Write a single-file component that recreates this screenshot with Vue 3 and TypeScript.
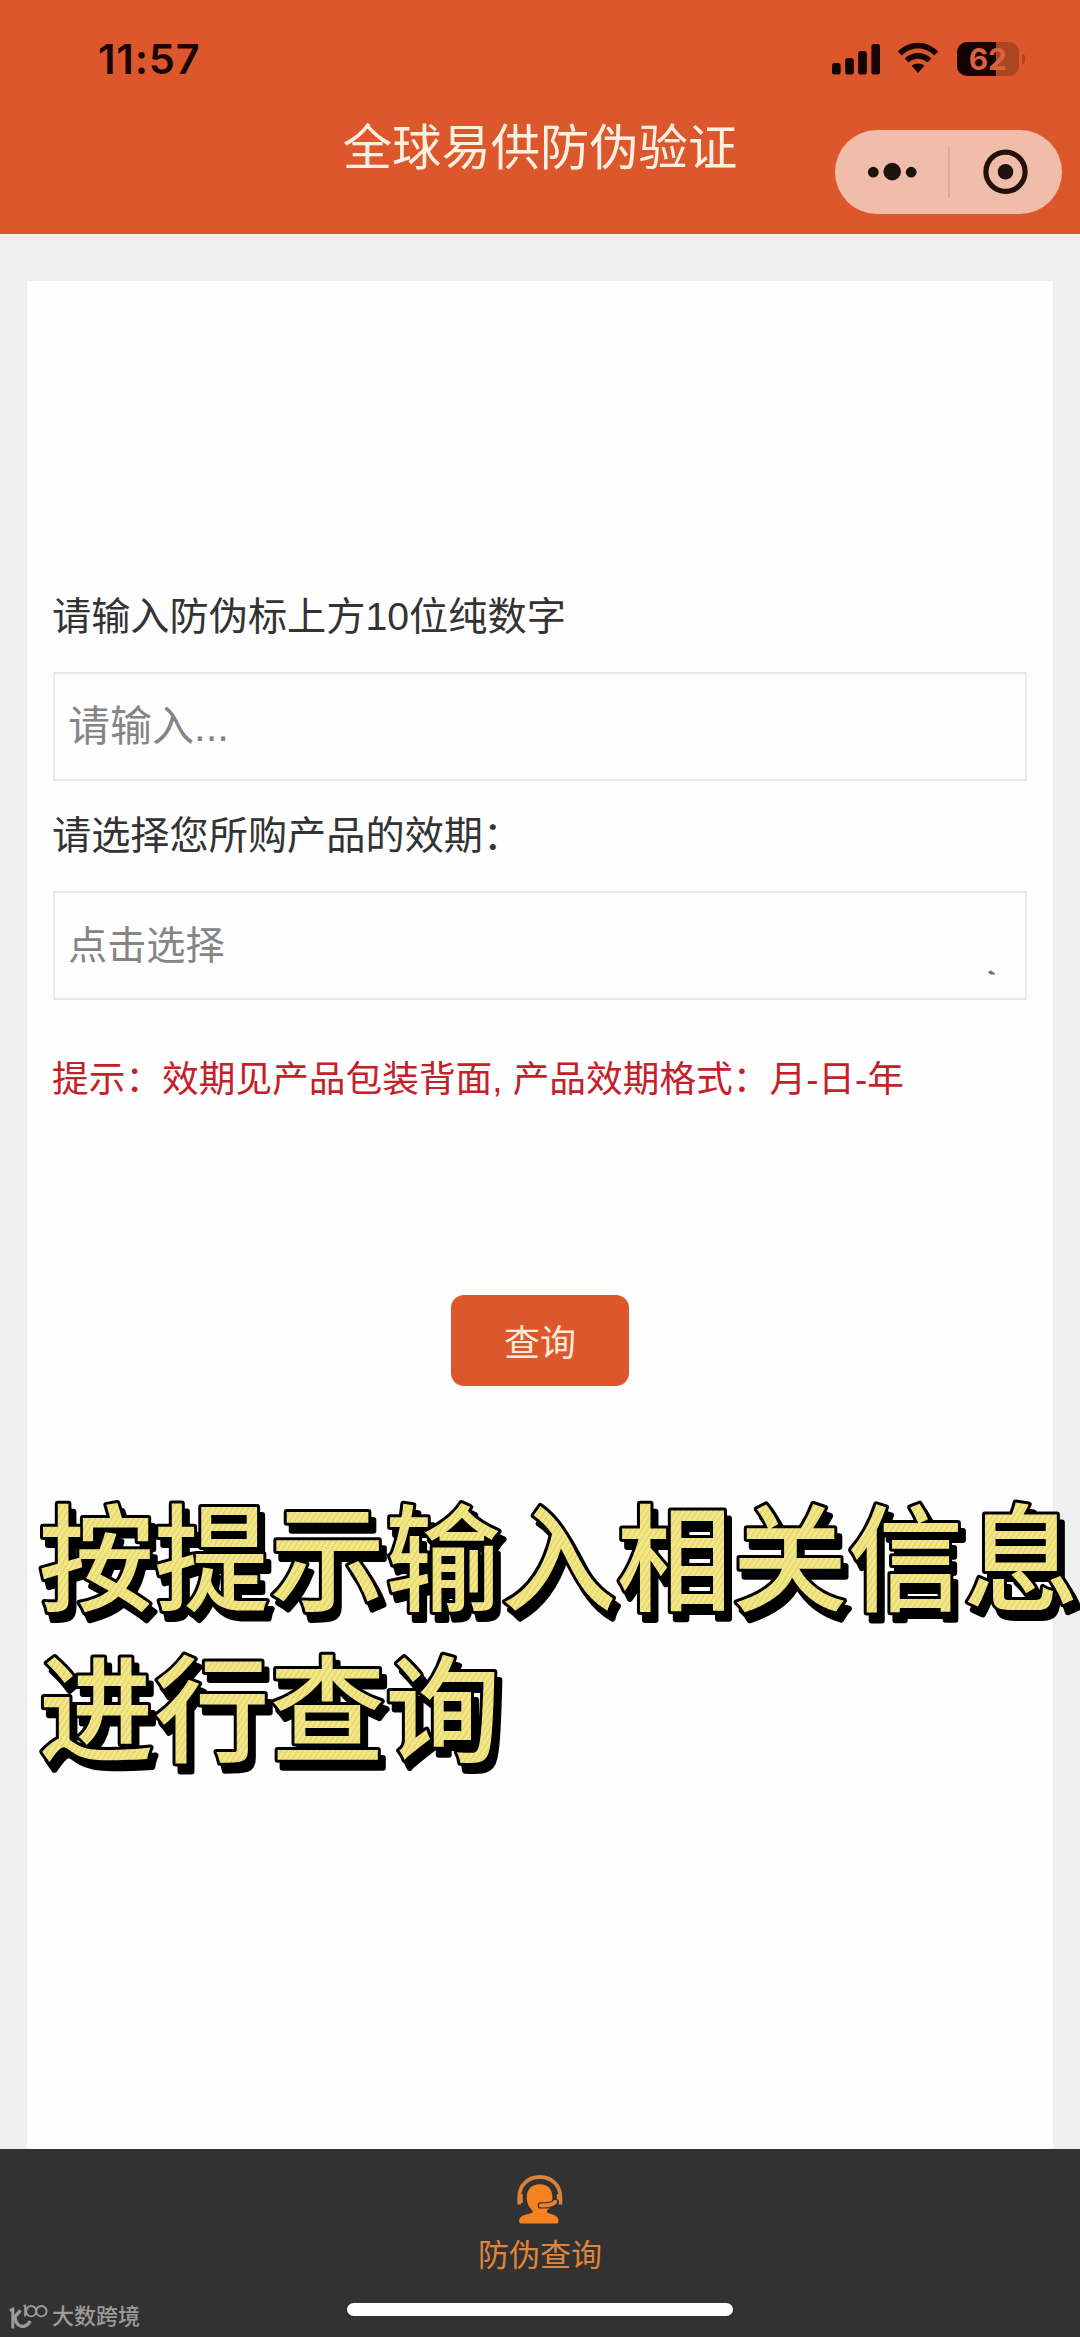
<script setup lang="ts">
interface Bar {
  x: number
  y: number
}

const signalBars: Bar[] = [
  { x: 0, y: 19 },
  { x: 13.2, y: 14 },
  { x: 26.2, y: 7 },
  { x: 39.4, y: 0 },
]

const captionLines: string[] = ['按提示输入相关信息', '进行查询']
</script>

<template>
  <div class="screen">
    <header class="header">
      <div class="status">
        <span class="clock">11:57</span>
        <div class="status-icons">
          <svg class="signal" width="48" height="31" viewBox="0 0 48 31">
            <rect v-for="bar in signalBars" :key="bar.x" :x="bar.x" :y="bar.y" width="8.6" :height="30.5 - bar.y" rx="2.6" />
          </svg>
          <svg class="wifi" width="42" height="32" viewBox="0 0 42 32">
            <path d="M0.8 9.6C12 -2.2 30 -2.2 41.2 9.6L37.4 13.6C28.2 4.2 13.8 4.2 4.6 13.6Z" />
            <path d="M7.6 16.6C15.4 9.2 26.6 9.2 34.4 16.6L30.4 20.6C25 15.6 17 15.6 11.6 20.6Z" />
            <path d="M14.6 23.8C18.4 20.8 23.6 20.8 27.4 23.8L21 31Z" />
          </svg>
          <div class="battery">
            <span class="battery-level">62</span>
            <span class="battery-nub"></span>
          </div>
        </div>
      </div>
      <h1 class="title">全球易供防伪验证</h1>
      <div class="capsule">
        <svg width="227" height="84" viewBox="0 0 227 84">
          <g fill="#1c130f">
            <circle cx="38.3" cy="42.2" r="5.4" />
            <circle cx="57.2" cy="41.6" r="8.8" />
            <circle cx="76.2" cy="42.2" r="5.4" />
            <circle cx="170.5" cy="41.8" r="7.8" />
          </g>
          <path d="M114 17V68" stroke="#dfa998" stroke-width="2" />
          <circle cx="170.5" cy="41.8" r="19.6" fill="none" stroke="#241008" stroke-width="5.2" />
        </svg>
      </div>
    </header>

    <main class="page">
      <section class="card">
        <label class="label">请输入防伪标上方10位纯数字</label>
        <div class="field code">请输入...</div>
        <label class="label second">请选择您所购产品的效期：</label>
        <div class="field picker">
          <span>点击选择</span>
          <svg class="mark" width="7" height="5" viewBox="0 0 7 5">
            <path d="M0 2.6L2.6 0.2L7 3.4V4.6H2.6Z" fill="#707070" />
          </svg>
        </div>
        <p class="tip">提示：效期见产品包装背面, 产品效期格式：月-日-年</p>
        <button class="submit" type="button">查询</button>
      </section>
    </main>

    <nav class="tabbar">
      <svg class="agent" width="46" height="50" viewBox="0 0 46 50">
        <path d="M2.2 29.5V22.5C2.2 10 11 2 22.8 2C34.6 2 43.4 10 43.4 22.5V29.5" fill="none" stroke="#d9823c" stroke-width="3.8" />
        <path d="M5.8 19V28H1.6V20Z M39.8 19V28H44V20Z" fill="#d9823c" />
        <path d="M22.8 9.2C31 9.2 35.4 14.4 35.4 22C35.4 28.4 33.6 32.4 30 35.8V37.6C35 39.6 41.4 40.6 41.4 45.4V46.6C41.4 48 40.6 48.6 39.4 48.6H4.2C3 48.6 2.2 48 2.2 46.6V45.4C2.2 40.6 10 39.6 15.6 37.6V35.8C12 32.4 9.8 28.4 9.8 22C9.8 14.4 14.6 9.2 22.8 9.2Z" fill="#f5821f" />
        <path d="M38.6 26.8C36 30.4 31 30.4 23.8 30.4" fill="none" stroke="#323232" stroke-width="6.4" stroke-linecap="round" />
        <path d="M38.2 26.8C36 30.4 30 30.4 23.8 30.4" fill="none" stroke="#e58334" stroke-width="4" stroke-linecap="round" />
      </svg>
      <span class="tab-text">防伪查询</span>
      <span class="home-bar"></span>
    </nav>

    <svg class="caption" width="1080" height="330" viewBox="0 0 1080 330">
      <defs>
        <pattern id="stripes" width="4.6" height="4.6" patternUnits="userSpaceOnUse" patternTransform="rotate(32)">
          <rect width="4.6" height="4.6" fill="#f3e892" />
          <rect width="2" height="4.6" fill="#e9d968" />
        </pattern>
      </defs>
      <text v-for="(line, i) in captionLines" :key="line" x="38.5" :y="132 + i * 151" fill="url(#stripes)">{{ line }}</text>
    </svg>

    <div class="watermark">
      <svg width="39" height="26" viewBox="0 0 39 26" fill="none" stroke="#9b9b9b">
        <path d="M0.8 6.8L3.8 5.2V24.6" stroke-width="3" />
        <path d="M11.4 6.4L5.8 13C6.4 18.6 9.8 23 14 22.4C17.4 22 19.8 19.8 21.2 17" stroke-width="3.4" />
        <path d="M14.4 1.8H16.2V12.6" stroke-width="2" />
        <ellipse cx="22.2" cy="7.2" rx="5" ry="5.2" stroke-width="1.9" />
        <ellipse cx="32.4" cy="7.2" rx="5.2" ry="5.2" stroke-width="1.9" />
      </svg>
      <span>大数跨境</span>
    </div>
  </div>
</template>

<style>
body {
  margin: 0;
  background: #efefef;
}
</style>

<style scoped>
.screen {
  position: relative;
  display: flex;
  flex-direction: column;
  width: 1080px;
  height: 2337px;
  overflow: hidden;
  background: #f0efef;
  font-family: 'Liberation Sans', 'Noto Sans CJK SC', sans-serif;
}

.header {
  position: relative;
  flex: none;
  height: 234px;
  background: #dc582c;
}

.status {
  display: flex;
  justify-content: space-between;
  align-items: center;
  height: 118px;
  padding: 0 61px 0 98px;
}

.clock {
  font: 600 41.5px/48px Inter, sans-serif;
  letter-spacing: 0.8px;
  color: #1a0503;
}

.status-icons {
  display: flex;
  align-items: center;
}

.signal,
.wifi {
  fill: #150402;
}

.wifi {
  margin: 0 17.5px 2px 17px;
}

.battery {
  position: relative;
  display: flex;
  align-items: center;
  justify-content: center;
  width: 62.5px;
  height: 34px;
  border-radius: 10px;
  background: linear-gradient(90deg, #150201 38.7px, #aa4720 38.7px);
}

.battery-level {
  font: 700 30px/34px Inter, sans-serif;
  letter-spacing: -0.3px;
  color: #dc6340;
}

.battery-nub {
  position: absolute;
  left: 65px;
  top: 12px;
  width: 3.5px;
  height: 10px;
  border-radius: 0 4px 4px 0;
  background: #aa4720;
}

.title {
  margin: 0;
  font-size: 49.3px;
  line-height: 60px;
  font-weight: 400;
  text-align: center;
  color: #fff0e2;
}

.capsule {
  position: absolute;
  left: 834.7px;
  top: 130px;
  width: 227px;
  height: 84px;
  border-radius: 42px;
  background: #f1bdab;
}

.page {
  flex: 1;
  display: flex;
  padding: 47px 27px 0;
}

.card {
  flex: 1;
  display: flex;
  flex-direction: column;
  padding: 306px 26px 0;
  background: #fefefe;
}

.label {
  height: 60px;
  margin-left: -1px;
  font-size: 39.2px;
  line-height: 60px;
  color: #333;
}

.label.second {
  margin-top: 25px;
}

.field {
  box-sizing: border-box;
  height: 109px;
  margin-top: 25px;
  padding: 0 13px;
  border: 2.5px solid #e9e9e9;
  color: #858585;
}

.code {
  font-size: 42px;
  line-height: 106px;
}

.picker {
  display: flex;
  justify-content: space-between;
  font-size: 39.2px;
  line-height: 105px;
}

.mark {
  margin: 77px 17px 0 0;
}

.tip {
  margin: 52px 0 0 -1px;
  font-size: 36.7px;
  line-height: 56px;
  white-space: nowrap;
  color: #c4202a;
}

.submit {
  align-self: center;
  width: 178px;
  height: 91px;
  margin-top: 187px;
  padding: 0;
  border: 0;
  border-radius: 13px;
  background: #dc582c;
  font: 400 36px/91px 'Noto Sans CJK SC', sans-serif;
  color: #ffe9d8;
}

.tabbar {
  flex: none;
  display: flex;
  flex-direction: column;
  align-items: center;
  height: 188px;
  background: #323232;
}

.agent {
  flex: none;
  margin-top: 26px;
}

.tab-text {
  margin-top: 8px;
  font-size: 31px;
  line-height: 46px;
  color: #e0843a;
}

.home-bar {
  width: 386px;
  height: 13px;
  margin-top: 24px;
  border-radius: 7px;
  background: #fff;
}

.caption {
  position: absolute;
  left: 0;
  top: 1470px;
  font: 500 115.6px 'Noto Sans CJK SC', sans-serif;
  filter: drop-shadow(5.5px 8px 0 #000);
}

.caption text {
  stroke: #000;
  stroke-width: 6px;
  stroke-linejoin: round;
  paint-order: stroke;
}

.watermark {
  position: absolute;
  left: 9px;
  top: 2303px;
  display: flex;
  align-items: center;
  gap: 4px;
  height: 28px;
  font-weight: 500;
  font-size: 22px;
  line-height: 28px;
  color: #9b9b9b;
}
</style>
